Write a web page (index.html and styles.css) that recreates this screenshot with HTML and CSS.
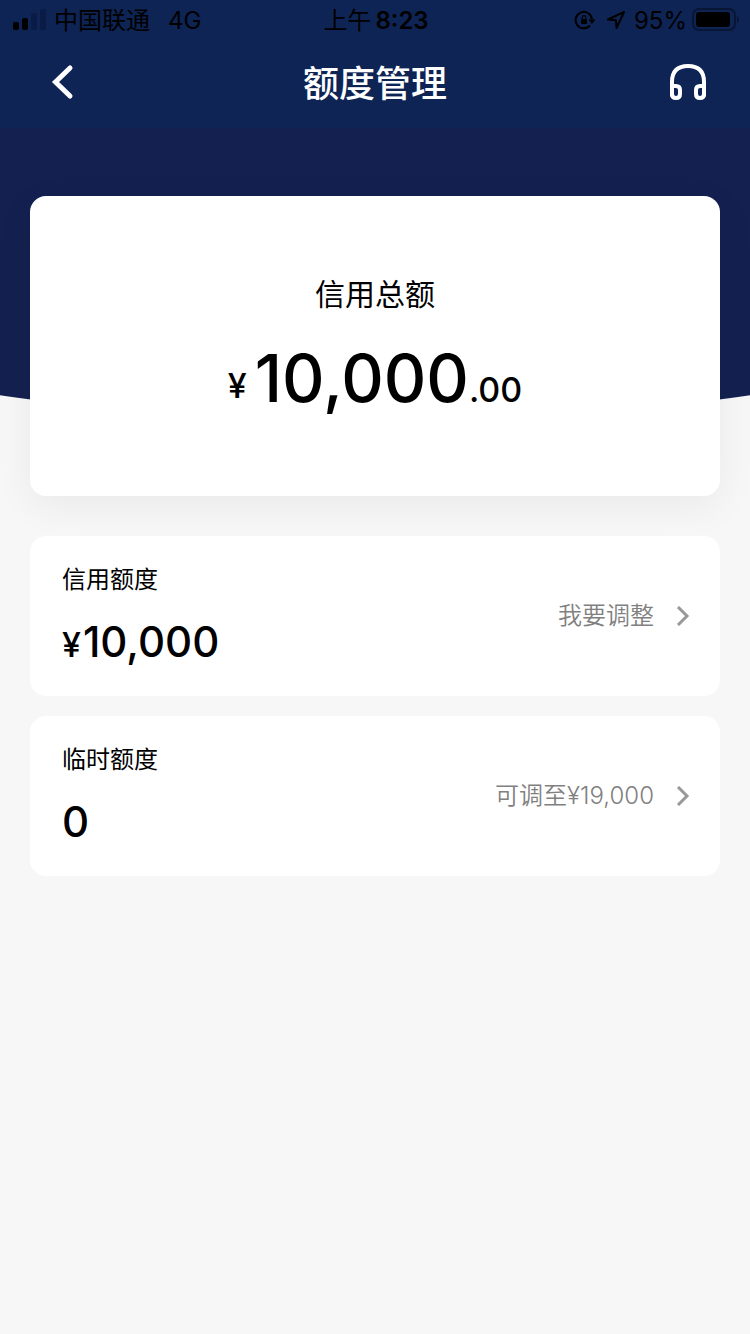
FILE: index.html
```html
<!DOCTYPE html>
<html lang="zh-CN">
<head>
<meta charset="utf-8">
<meta name="viewport" content="width=device-width, initial-scale=1">
<title>额度管理</title>
<link rel="stylesheet" href="styles.css">
</head>
<body>
<header class="top">
  <div class="status">
    <div class="status-side">
      <svg class="signal" width="34" height="22" viewBox="0 0 34 22" aria-hidden="true">
        <rect x="1" y="13" width="6" height="8" rx="2"/>
        <rect x="10" y="9" width="6" height="12" rx="2"/>
        <rect class="faint" x="19" y="4" width="6" height="17" rx="2"/>
        <rect class="faint" x="28" y="0" width="6" height="21" rx="2"/>
      </svg>
      <span class="status-text carrier">中国联通</span>
      <span class="status-text network">4G</span>
    </div>
    <div class="status-text clock"><span class="period">上午</span><time>8:23</time></div>
    <div class="status-side status-end">
      <svg width="22" height="20" viewBox="0 0 22 20" aria-hidden="true">
        <path d="M16 15.500A8.200 8.200 0 1 1 18 9.500" fill="none" stroke="#000" stroke-width="2"/>
        <path d="M14.500 9.500h7L18 14z"/>
        <rect x="7" y="9" width="6" height="5" rx="1"/>
        <path d="M8.200 9.500V7.500a1.800 1.800 0 0 1 3.600 0v2" fill="none" stroke="#000" stroke-width="1.200"/>
      </svg>
      <svg class="locate" width="20" height="20" viewBox="0 0 20 20" aria-hidden="true">
        <path d="M18 2 2 9.500l8 .8.500 7.700z" fill="none" stroke="#000" stroke-width="2" stroke-linejoin="round"/>
      </svg>
      <span class="status-text percent">95%</span>
      <svg width="48" height="24" viewBox="0 0 48 24" aria-hidden="true">
        <rect x="1" y="1" width="42" height="21" rx="6" fill="none" stroke="#081535" stroke-width="2"/>
        <rect x="4" y="4" width="34" height="15" rx="3"/>
        <path d="M45 8c2.600 1 2.600 6 0 7z" fill="#081535"/>
      </svg>
    </div>
  </div>
  <nav class="nav">
    <button class="nav-button" type="button" aria-label="返回">
      <svg width="36" height="36" viewBox="0 0 36 36" aria-hidden="true"><path d="M26 4 11.500 18 26 32" fill="none" stroke="#fff" stroke-width="5" stroke-linecap="round"/></svg>
    </button>
    <h1 class="title">额度管理</h1>
    <button class="nav-button nav-end" type="button" aria-label="客服">
      <svg width="36" height="36" viewBox="0 0 36 36" fill="none" stroke="#fff" stroke-width="4" stroke-linecap="round" stroke-linejoin="round" aria-hidden="true">
        <path d="M2 31V18C2 7 8 2 18 2s16 5 16 16v13"/>
        <path d="M2 22h4q4 0 4 4v4q0 4-4 4t-4-4zM34 22h-4q-4 0-4 4v4q0 4 4 4t4-4z"/>
      </svg>
    </button>
  </nav>
</header>
<main class="page">
  <div class="backdrop"></div>
  <section class="total">
    <h2 class="total-label">信用总额</h2>
    <p class="total-amount"><span class="total-currency">¥</span>10,000<span class="total-cents">.00</span></p>
  </section>
  <section class="row">
    <div class="limit">
      <h2 class="limit-label">信用额度</h2>
      <p class="limit-amount"><span class="limit-currency">¥</span>10,000</p>
    </div>
    <button class="action" type="button">我要调整
      <svg width="14" height="20" viewBox="0 0 14 20" aria-hidden="true"><path d="m2 1 9 9-9 9" fill="none" stroke="#999" stroke-width="3"/></svg>
    </button>
  </section>
  <section class="row">
    <div class="limit">
      <h2 class="limit-label">临时额度</h2>
      <p class="limit-amount">0</p>
    </div>
    <button class="action" type="button">可调至¥19,000
      <svg width="14" height="20" viewBox="0 0 14 20" aria-hidden="true"><path d="m2 1 9 9-9 9" fill="none" stroke="#999" stroke-width="3"/></svg>
    </button>
  </section>
</main>
</body>
</html>
```
FILE: styles.css
```css
* {
  box-sizing: border-box;
}

body {
  margin: 0;
  background: #f7f7f7;
  color: #000;
  font-family: Inter, "Noto Sans CJK SC", sans-serif;
}

h1, h2, p {
  margin: 0;
  font-weight: 400;
}

button {
  padding: 0;
  border: 0;
  background: none;
  font: inherit;
  cursor: pointer;
}

svg {
  display: block;
  flex: none;
}

.top {
  background: #0e2455;
}

.status {
  display: grid;
  grid-template-columns: 1fr auto 1fr;
  height: 40px;
  padding: 0 10px 0 12px;
  align-items: center;
  font-size: 24px;
  line-height: 38px;
  white-space: nowrap;
}

.status-side {
  display: flex;
  align-items: center;
}

.status-end {
  justify-content: flex-end;
}

.status-text {
  padding-top: 2px;
}

.faint {
  fill: #0a1c46;
}

.carrier {
  margin-left: 8px;
}

.network {
  margin-left: 18px;
}

.clock {
  display: flex;
  gap: 4px;
  font-weight: 600;
}

.period {
  font-weight: 400;
}

.locate {
  margin-left: 10px;
}

.percent {
  margin: 0 5px 0 8px;
}

.nav {
  display: grid;
  grid-template-columns: 1fr auto 1fr;
  height: 88px;
  padding: 0 44px 4px;
  align-items: center;
}

.nav-button {
  justify-self: start;
}

.nav-end {
  justify-self: end;
}

.title {
  padding-top: 4px;
  color: #fff;
  font-size: 36px;
  font-weight: 500;
  line-height: 52px;
}

.page {
  position: relative;
  display: flex;
  flex-direction: column;
  gap: 20px;
  padding: 68px 30px 30px;
}

/* Curved band behind the total card */
.backdrop {
  position: absolute;
  inset: 0 0 auto;
  height: 294px;
  background: #142150;
  clip-path: ellipse(120% 100% at 50% 0);
}

.total {
  position: relative;
  margin-bottom: 20px;
  padding: 76px 20px 74px;
  border-radius: 16px;
  background: #fff;
  box-shadow: 0 10px 40px rgba(0, 0, 0, 0.06);
  text-align: center;
}

.total-label {
  font-size: 30px;
  line-height: 44px;
}

.total-amount {
  margin-top: 18px;
  font-size: 66px;
  font-weight: 500;
  line-height: 88px;
}

.total-currency,
.total-cents,
.limit-currency {
  line-height: 1;
}

.total-currency {
  margin-right: 8px;
  font-size: 34px;
  vertical-align: 4px;
}

.total-cents {
  font-size: 34px;
}

.row {
  display: flex;
  justify-content: space-between;
  align-items: center;
  min-height: 160px;
  padding: 24px 30px 24px 32px;
  border-radius: 16px;
  background: #fff;
}

.limit-label {
  font-size: 24px;
  line-height: 40px;
}

.limit-amount {
  margin-top: 12px;
  font-size: 42px;
  font-weight: 500;
  line-height: 60px;
}

.limit-currency {
  margin-right: 2px;
  font-size: 34px;
}

.action {
  display: flex;
  align-items: center;
  gap: 22px;
  color: #808080;
  font-size: 24px;
  font-weight: 350;
  line-height: 40px;
}
```
